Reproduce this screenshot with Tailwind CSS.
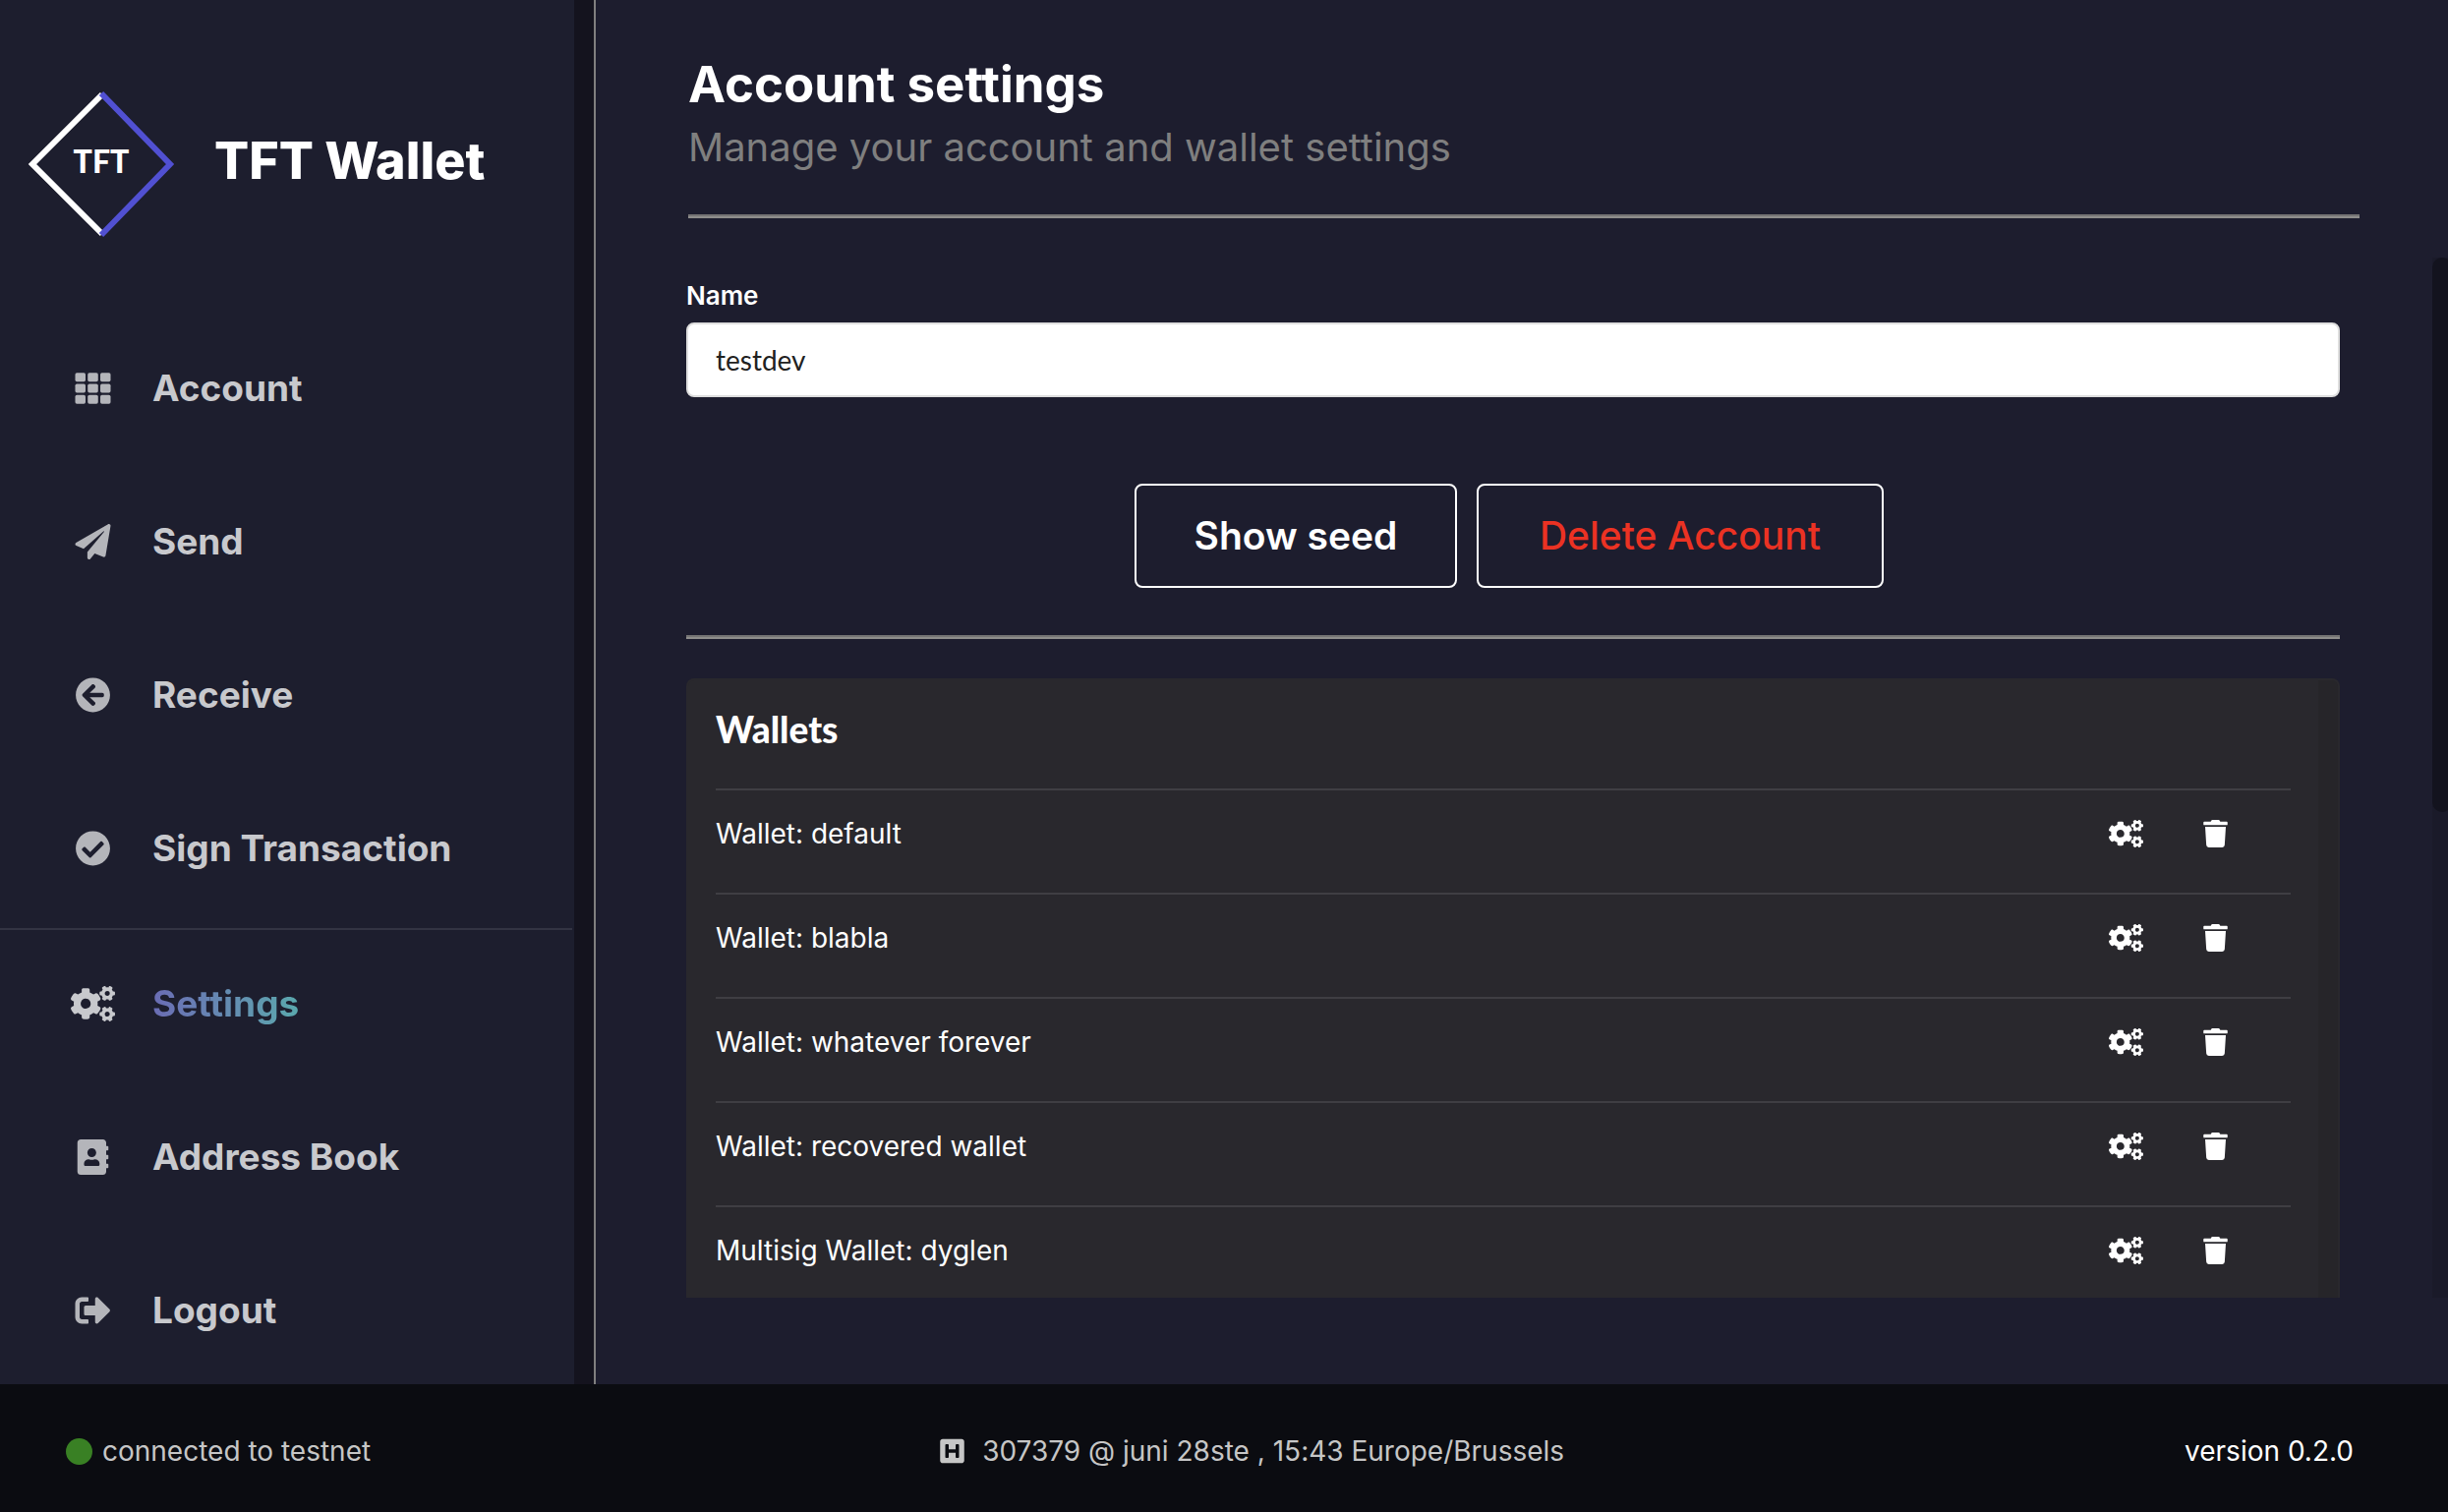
<!DOCTYPE html>
<html lang="en">
<head>
<meta charset="utf-8">
<meta name="viewport" content="width=device-width, initial-scale=1">
<title>TFT Wallet</title>
<script src="https://cdn.jsdelivr.net/npm/@tailwindcss/browser@4"></script>
</head>
<body class="flex h-screen flex-col overflow-hidden bg-[#1d1d2e] font-['Inter',sans-serif] text-white [font-feature-settings:'liga'_0,'calt'_0,'dlig'_0]">

<!-- icon sprite -->
<svg class="hidden" aria-hidden="true">
  <symbol id="i-grid" viewBox="0 0 512 512">
    <rect x="0" y="32" width="149" height="128" rx="24"/><rect x="181" y="32" width="150" height="128" rx="24"/><rect x="363" y="32" width="149" height="128" rx="24"/>
    <rect x="0" y="192" width="149" height="128" rx="24"/><rect x="181" y="192" width="150" height="128" rx="24"/><rect x="363" y="192" width="149" height="128" rx="24"/>
    <rect x="0" y="352" width="149" height="128" rx="24"/><rect x="181" y="352" width="150" height="128" rx="24"/><rect x="363" y="352" width="149" height="128" rx="24"/>
  </symbol>
  <symbol id="i-plane" viewBox="0 0 512 512"><path d="M476 3.2L12.5 270.6c-18.1 10.4-15.8 35.6 2.2 43.2L121 358.4l287.3-253.2c5.5-4.9 13.3 2.6 8.6 8.3L176 407v80.5c0 23.6 28.5 32.9 42.5 15.8L282 426l124.6 52.2c14.2 6 30.4-2.9 33-18.2l72-432C515 7.8 493.3-6.8 476 3.2z"/></symbol>
  <symbol id="i-left" viewBox="0 0 512 512"><path d="M256 504C119 504 8 393 8 256S119 8 256 8s248 111 248 248-111 248-248 248zm28.9-143.6L209.4 288H392c13.3 0 24-10.7 24-24v-16c0-13.3-10.7-24-24-24H209.4l75.5-72.4c9.7-9.3 9.9-24.8.4-34.3l-11-10.9c-9.4-9.4-24.6-9.4-33.9 0L107.7 239c-9.4 9.4-9.4 24.6 0 33.9l132.7 132.7c9.4 9.4 24.6 9.4 33.9 0l11-10.9c9.5-9.5 9.3-25-.4-34.3z"/></symbol>
  <symbol id="i-check" viewBox="0 0 512 512"><path fill-rule="evenodd" d="M504 256c0 136.967-111.033 248-248 248S8 392.967 8 256 119.033 8 256 8s248 111.033 248 248zM227.314 387.314l184-184c6.248-6.248 6.248-16.379 0-22.627l-22.627-22.627c-6.248-6.249-16.379-6.249-22.628 0L216 308.118l-70.059-70.059c-6.248-6.248-16.379-6.248-22.628 0l-22.627 22.627c-6.248 6.248-6.248 16.379 0 22.627l104 104c6.249 6.249 16.379 6.249 22.628.001z"/></symbol>
  <symbol id="i-cogs" viewBox="0 0 640 512">
    <path fill-rule="evenodd" d="M386.3 286.1l33.7 16.8c10.1 5.8 14.5 18.1 10.5 29.1-8.9 24.2-26.4 46.4-42.6 65.8-7.4 8.9-20.2 11.1-30.3 5.3l-29.1-16.8c-16 13.7-34.6 24.6-54.9 31.7v33.6c0 11.6-8.3 21.6-19.7 23.6-24.6 4.2-50.4 4.4-75.9 0-11.5-2-20-11.9-20-23.6V418c-20.3-7.2-38.9-18-54.9-31.7L74 403c-10 5.8-22.9 3.6-30.3-5.3-16.2-19.4-33.3-41.6-42.2-65.7-4-10.9.4-23.2 10.5-29.1l33.3-16.8c-3.9-20.9-3.9-42.4 0-63.4L12 205.8c-10.1-5.8-14.6-18.1-10.5-29 8.9-24.2 26-46.4 42.2-65.8 7.4-8.9 20.2-11.1 30.3-5.3l29.1 16.8c16-13.7 34.6-24.6 54.9-31.7V57.1c0-11.5 8.2-21.5 19.6-23.5 24.6-4.2 50.5-4.4 76-.1 11.5 2 20 11.9 20 23.6v33.6c20.3 7.2 38.9 18 54.9 31.7l29.1-16.8c10-5.8 22.9-3.6 30.3 5.3 16.2 19.4 33.2 41.6 42.1 65.8 4 10.9.1 23.2-10 29.1l-33.7 16.8c3.9 21 3.9 42.5 0 63.5zm-117.6 21.1c59.2-77-28.7-164.9-105.7-105.7-59.2 77 28.7 164.9 105.7 105.7z"/>
    <path id="cog-small" fill-rule="evenodd" d="M512.1 191l-8.2 14.3c-3 5.3-9.4 7.5-15.1 5.4-11.8-4.4-22.6-10.7-32.1-18.6-4.6-3.8-5.8-10.5-2.8-15.7l8.2-14.3c-6.9-8-12.3-17.3-15.9-27.4h-16.5c-6 0-11.2-4.3-12.2-10.3-2-12-2.1-24.6 0-37.1 1-6 6.2-10.4 12.2-10.4h16.5c3.6-10.1 9-19.4 15.9-27.4l-8.2-14.3c-3-5.2-1.9-11.9 2.8-15.7 9.5-7.9 20.4-14.2 32.1-18.6 5.7-2.1 12.1.1 15.1 5.4l8.2 14.3c10.5-1.9 21.2-1.9 31.7 0L552 6.3c3-5.3 9.4-7.5 15.1-5.4 11.8 4.4 22.6 10.7 32.1 18.6 4.6 3.8 5.8 10.5 2.8 15.7l-8.2 14.3c6.9 8 12.3 17.3 15.9 27.4h16.5c6 0 11.2 4.3 12.2 10.3 2 12 2.1 24.6 0 37.1-1 6-6.2 10.4-12.2 10.4h-16.5c-3.6 10.1-9 19.4-15.9 27.4l8.2 14.3c3 5.2 1.9 11.9-2.8 15.7-9.5 7.9-20.4 14.2-32.1 18.6-5.7 2.1-12.1-.1-15.1-5.4l-8.2-14.3c-10.4 1.9-21.2 1.9-31.7 0zm-10.5-58.8c38.5 29.6 82.4-14.3 52.8-52.8-38.5-29.7-82.4 14.3-52.8 52.8z"/>
    <use href="#cog-small" y="300"/>
  </symbol>
  <symbol id="i-book" viewBox="0 0 448 512"><path fill-rule="evenodd" d="M436 160c6.6 0 12-5.4 12-12v-40c0-6.6-5.4-12-12-12h-20V48c0-26.5-21.5-48-48-48H48C21.5 0 0 21.5 0 48v416c0 26.5 21.5 48 48 48h320c26.5 0 48-21.5 48-48v-48h20c6.6 0 12-5.4 12-12v-40c0-6.6-5.4-12-12-12h-20v-64h20c6.6 0 12-5.4 12-12v-40c0-6.6-5.4-12-12-12h-20v-64h20zm-228-32c35.3 0 64 28.7 64 64s-28.7 64-64 64-64-28.7-64-64 28.7-64 64-64zm112 236.8c0 10.6-10 19.2-22.4 19.2H118.4C106 384 96 375.4 96 364.8v-19.2c0-31.8 30.1-57.6 67.2-57.6h5c12.3 5.1 25.7 8 39.8 8s27.6-2.9 39.8-8h5c37.1 0 67.2 25.8 67.2 57.6v19.2z"/></symbol>
  <symbol id="i-logout" viewBox="0 0 512 512"><path d="M497 273L329 441c-15 15-41 4.5-41-17v-96H152c-13.3 0-24-10.7-24-24v-96c0-13.3 10.7-24 24-24h136V88c0-21.4 25.9-32 41-17l168 168c9.3 9.4 9.3 24.6 0 34zM192 436v-40c0-6.6-5.4-12-12-12H96c-17.7 0-32-14.3-32-32V160c0-17.7 14.3-32 32-32h84c6.6 0 12-5.4 12-12V76c0-6.6-5.4-12-12-12H96c-53 0-96 43-96 96v192c0 53 43 96 96 96h84c6.6 0 12-5.4 12-12z"/></symbol>
  <symbol id="i-trash" viewBox="0 0 448 512"><path d="M432 32H312l-9.4-18.7A24 24 0 0 0 281.1 0H166.8a23.72 23.72 0 0 0-21.4 13.3L136 32H16A16 16 0 0 0 0 48v32a16 16 0 0 0 16 16h416a16 16 0 0 0 16-16V48a16 16 0 0 0-16-16zM53.2 467a48 48 0 0 0 47.9 45h245.8a48 48 0 0 0 47.9-45L416 128H32z"/></symbol>
  <symbol id="i-h" viewBox="0 0 448 512"><path fill-rule="evenodd" d="M448 80v352c0 26.51-21.49 48-48 48H48c-26.51 0-48-21.49-48-48V80c0-26.51 21.49-48 48-48h352c26.51 0 48 21.49 48 48zm-112 48h-32c-8.837 0-16 7.163-16 16v80H160v-80c0-8.837-7.163-16-16-16h-32c-8.837 0-16 7.163-16 16v224c0 8.837 7.163 16 16 16h32c8.837 0 16-7.163 16-16v-80h128v80c0 8.837 7.163 16 16 16h32c8.837 0 16-7.163 16-16V144c0-8.837-7.163-16-16-16z"/></symbol>
</svg>

<div class="flex min-h-0 flex-1">

  <!-- sidebar -->
  <aside class="flex w-[604px] shrink-0 overflow-hidden bg-[#14131e]">
    <div class="w-[584px] shrink-0 bg-[#1d1e2e]">
      <div class="flex h-80 items-start gap-10 pt-[92px] pl-7">
        <svg class="size-[150px] shrink-0" viewBox="0 0 150 150" role="img" aria-label="TFT logo">
          <path d="M76 4L5 75l71 71" fill="none" stroke="#fff" stroke-width="6"/>
          <path d="M75 3L145 75l-70 72" fill="none" stroke="#5150d2" stroke-width="6"/>
          <text x="75" y="84" text-anchor="middle" class="fill-white font-['Lato',sans-serif] text-[32px] font-black">TFT</text>
        </svg>
        <h1 class="pb-[6px] text-[52px] leading-[144px] font-extrabold">TFT Wallet</h1>
      </div>
      <nav class="w-[582px] text-[37px] font-bold text-[#c8c9cd]">
        <a href="#account" class="flex h-[156px] items-center gap-[38px] pb-[6px] pl-[72px]"><svg class="h-9 w-[45px] fill-[#b4b5ba]"><use href="#i-grid"/></svg>Account</a>
        <a href="#send" class="flex h-[156px] items-center gap-[38px] pb-[6px] pl-[72px]"><svg class="h-9 w-[45px] fill-[#b4b5ba]"><use href="#i-plane"/></svg>Send</a>
        <a href="#receive" class="flex h-[156px] items-center gap-[38px] pb-[6px] pl-[72px]"><svg class="h-9 w-[45px] fill-[#b4b5ba]"><use href="#i-left"/></svg>Receive</a>
        <a href="#sign" class="flex h-[156px] items-center gap-[38px] pb-[6px] pl-[72px]"><svg class="h-9 w-[45px] fill-[#b4b5ba]"><use href="#i-check"/></svg>Sign Transaction</a>
        <div class="border-t-2 border-[#333443]">
          <a href="#settings" aria-current="page" class="flex h-[156px] items-center gap-[38px] pb-[6px] pl-[72px]"><svg class="h-9 w-[45px] fill-[#c8c9cd]"><use href="#i-cogs"/></svg><span class="bg-linear-to-r from-[#6a6cb4] to-[#5aa8ad] bg-clip-text text-transparent">Settings</span></a>
          <a href="#address-book" class="flex h-[156px] items-center gap-[38px] pb-[6px] pl-[72px]"><svg class="h-9 w-[45px] fill-[#b4b5ba]"><use href="#i-book"/></svg>Address Book</a>
          <a href="#logout" class="flex h-[156px] items-center gap-[38px] pb-[6px] pl-[72px]"><svg class="h-9 w-[45px] fill-[#b4b5ba]"><use href="#i-logout"/></svg>Logout</a>
        </div>
      </nav>
    </div>
  </aside>

  <!-- content -->
  <main class="flex min-w-0 flex-1 flex-col border-l-2 border-[#807f7f] pb-[88px]">
    <header class="pt-[54px] pr-[90px] pl-[94px]">
      <h2 class="text-[51px] leading-[64px] font-bold">Account settings</h2>
      <p class="text-[40px] leading-[64px] text-[#7f7f7f]">Manage your account and wallet settings</p>
      <hr class="mt-9 h-1 border-t-2 border-b-2 border-t-[#757474] border-b-[#8e8d8b]">
    </header>

    <div class="mt-10 flex min-h-0 flex-1">
      <section class="flex min-w-0 flex-1 flex-col pt-[19px] pr-[94px] pl-[92px]">
        <label for="name" class="text-[26px] leading-10 font-semibold">Name</label>
        <input id="name" type="text" value="testdev" class="mt-[7px] h-[76px] w-full shrink-0 rounded-lg border-2 border-[#dedede] bg-white px-7 font-['Lato',sans-serif] text-[28px] text-[#212121]">

        <div class="mt-22 flex shrink-0 justify-center gap-5 pr-2">
          <button type="button" class="h-[106px] w-[328px] rounded-lg border-2 border-white text-[39px] font-semibold">Show seed</button>
          <button type="button" class="h-[106px] w-[414px] rounded-lg border-2 border-white text-[39px] font-medium text-[#eb3223]">Delete Account</button>
        </div>

        <hr class="mt-12 h-1 shrink-0 border-t-2 border-b-2 border-t-[#757474] border-b-[#8e8d8b]">

        <div class="mt-10 flex min-h-0 flex-1 overflow-hidden rounded-t-lg border-x-2 border-t-2 border-[#29282d] bg-[#29282d]">
          <div class="min-w-0 flex-1 px-7">
            <h3 class="h-[110px] font-['Lato',sans-serif] text-[37px] leading-[100px] font-black">Wallets</h3>
            <ul class="text-[28px]">
              <li class="flex h-[106px] items-center border-t-2 border-[#3f3e43] pr-16 pb-4"><span class="flex-1">Wallet: default</span>
                <button type="button" aria-label="Wallet settings"><svg class="h-7 w-[35px] fill-white"><use href="#i-cogs"/></svg></button>
                <button type="button" aria-label="Delete wallet" class="ml-[61px]"><svg class="h-7 w-[25px] fill-white"><use href="#i-trash"/></svg></button></li>
              <li class="flex h-[106px] items-center border-t-2 border-[#3f3e43] pr-16 pb-4"><span class="flex-1">Wallet: blabla</span>
                <button type="button" aria-label="Wallet settings"><svg class="h-7 w-[35px] fill-white"><use href="#i-cogs"/></svg></button>
                <button type="button" aria-label="Delete wallet" class="ml-[61px]"><svg class="h-7 w-[25px] fill-white"><use href="#i-trash"/></svg></button></li>
              <li class="flex h-[106px] items-center border-t-2 border-[#3f3e43] pr-16 pb-4"><span class="flex-1">Wallet: whatever forever</span>
                <button type="button" aria-label="Wallet settings"><svg class="h-7 w-[35px] fill-white"><use href="#i-cogs"/></svg></button>
                <button type="button" aria-label="Delete wallet" class="ml-[61px]"><svg class="h-7 w-[25px] fill-white"><use href="#i-trash"/></svg></button></li>
              <li class="flex h-[106px] items-center border-t-2 border-[#3f3e43] pr-16 pb-4"><span class="flex-1">Wallet: recovered wallet</span>
                <button type="button" aria-label="Wallet settings"><svg class="h-7 w-[35px] fill-white"><use href="#i-cogs"/></svg></button>
                <button type="button" aria-label="Delete wallet" class="ml-[61px]"><svg class="h-7 w-[25px] fill-white"><use href="#i-trash"/></svg></button></li>
              <li class="flex h-[106px] items-center border-t-2 border-[#3f3e43] pr-16 pb-4"><span class="flex-1">Multisig Wallet: dyglen</span>
                <button type="button" aria-label="Wallet settings"><svg class="h-7 w-[35px] fill-white"><use href="#i-cogs"/></svg></button>
                <button type="button" aria-label="Delete wallet" class="ml-[61px]"><svg class="h-7 w-[25px] fill-white"><use href="#i-trash"/></svg></button></li>
            </ul>
          </div>
          <div class="w-5 shrink-0 bg-[#262529]"></div>
        </div>
      </section>

      <!-- scrollbar -->
      <div class="w-4 shrink-0 overflow-hidden bg-[#1a1a29]">
        <div class="h-[564px] w-5 rounded-full bg-[#13131e]"></div>
      </div>
    </div>
  </main>
</div>

<footer class="flex h-[130px] shrink-0 items-center bg-[#0b0c11] pt-[6px] text-[28px] text-[#c6c6c6]">
  <div class="flex w-[38.4%] items-center gap-[10px] pl-[67px]"><span class="size-[27px] rounded-full bg-[#398024]"></span>connected to testnet</div>
  <div class="flex items-center gap-[18px]"><svg class="h-7 w-[25px] fill-[#c6c6c6]"><use href="#i-h"/></svg>307379 @ juni 28ste , 15:43 Europe/Brussels</div>
  <div class="ml-auto pr-24 text-white">version 0.2.0</div>
</footer>
</body>
</html>
